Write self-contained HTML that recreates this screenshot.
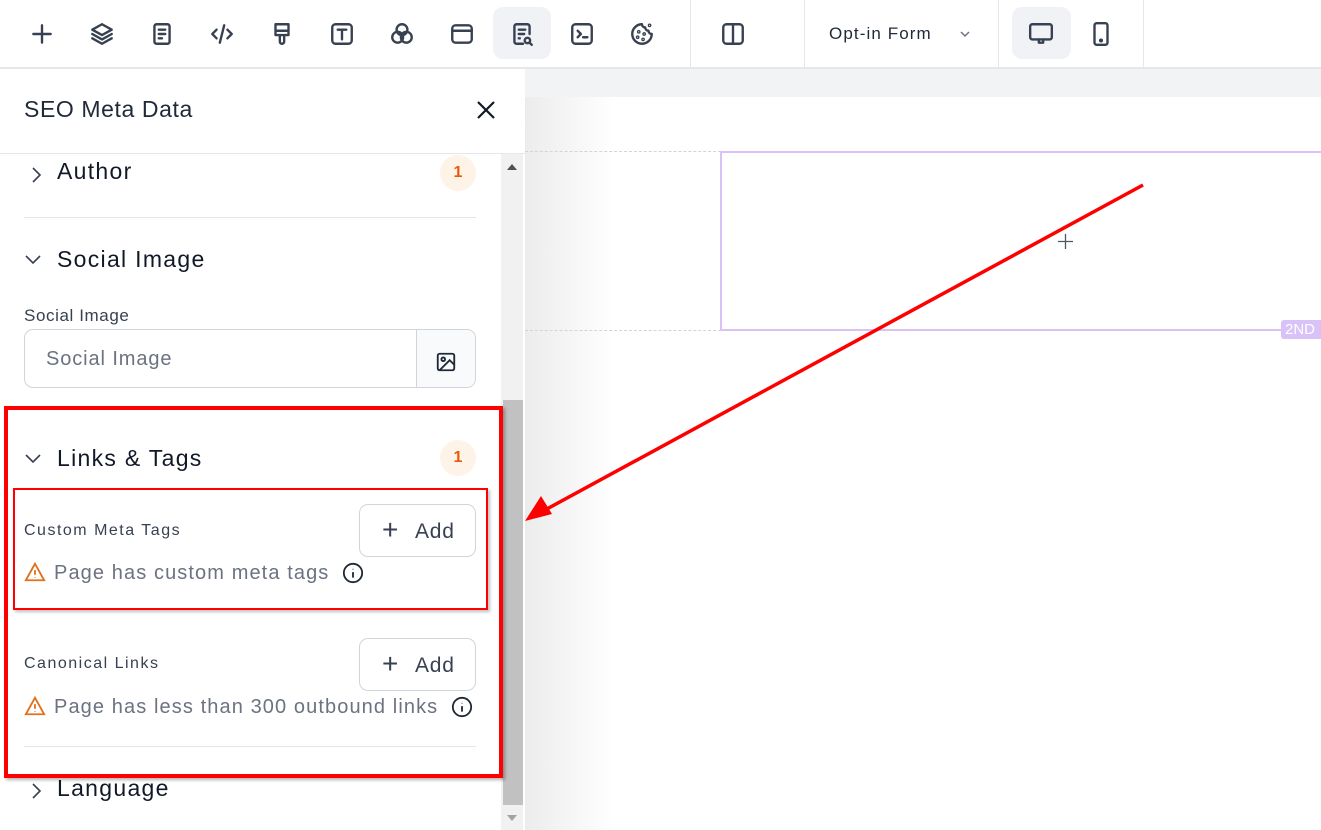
<!DOCTYPE html>
<html><head><meta charset="utf-8"><style>
*{box-sizing:border-box;margin:0;padding:0}
body{width:1321px;height:830px;overflow:hidden;background:#fff;font-family:"Liberation Sans",sans-serif;position:relative;color:#1f2937}
.abs{position:absolute}
.tb{left:0;top:0;width:1321px;height:69px;background:#fff;border-bottom:2px solid #e5e7eb}
.ic{position:absolute;top:21px;width:26px;height:26px}
.ic svg{width:26px;height:26px;fill:none;stroke:#374151;stroke-width:2.2;stroke-linecap:round;stroke-linejoin:round}
.vd{position:absolute;top:0;width:1px;height:67px;background:#e5e7eb}
.sec{font-size:23px;color:#111827;letter-spacing:1.3px}
.badge{width:36px;height:36px;border-radius:18px;background:#fdf3e6;color:#ea580c;font-size:16px;font-weight:bold;text-align:center;line-height:36px}
.lbl{font-size:16px;color:#374151;letter-spacing:1.5px}
.warn{font-size:20px;color:#6b7280;letter-spacing:1.1px}
.btn{width:117px;height:53px;border:1px solid #d1d5db;border-radius:9px;background:#fff;font-size:21px;color:#374151}
.hr{height:1px;background:#e5e7eb;left:24px;width:452px}
</style></head><body>
<div class="abs tb"></div>
<div class="abs" style="left:493px;top:7px;width:58px;height:52px;border-radius:10px;background:#f1f2f5"></div>
<div class="abs" style="left:1012px;top:7px;width:59px;height:52px;border-radius:10px;background:#f1f2f5"></div>
<div class="ic" style="left:29px"><svg viewBox="0 0 24 24"><path d="M12 4v16M4 12h16"/></svg></div>
<div class="ic" style="left:89px"><svg viewBox="0 0 24 24"><path d="M12 3l9 5-9 5-9-5z M3 12l9 5 9-5 M3 16l9 5 9-5"/></svg></div>
<div class="ic" style="left:149px"><svg viewBox="0 0 24 24"><rect x="5" y="3" width="14" height="18" rx="2"/><path d="M9 8h6M9 12h6M9 16h3"/></svg></div>
<div class="ic" style="left:209px"><svg viewBox="0 0 24 24"><path d="M7 8l-4 4 4 4M17 8l4 4-4 4M14 4l-4 16"/></svg></div>
<div class="ic" style="left:269px"><svg viewBox="0 0 24 24"><path d="M6 3h12v10H6z M6 9h12 M10 13v6a2 2 0 004 0v-6"/></svg></div>
<div class="ic" style="left:329px"><svg viewBox="0 0 24 24"><rect x="3" y="3" width="18" height="18" rx="3"/><path d="M8 8h8M12 8v9"/></svg></div>
<div class="ic" style="left:389px"><svg viewBox="0 0 24 24"><circle cx="12" cy="8" r="5"/><circle cx="8" cy="15" r="5"/><circle cx="16" cy="15" r="5"/></svg></div>
<div class="ic" style="left:449px"><svg viewBox="0 0 24 24"><rect x="3" y="4" width="18" height="16" rx="3"/><path d="M3 9h18"/></svg></div>
<div class="ic" style="left:509px"><svg viewBox="0 0 24 24"><path d="M13 21H7a2 2 0 01-2-2V5a2 2 0 012-2h10a2 2 0 012 2v7"/><path d="M9 8h6M9 12h5M9 16h1"/><circle cx="17" cy="18" r="2.5"/><path d="M19 20l2 2"/></svg></div>
<div class="ic" style="left:569px"><svg viewBox="0 0 24 24"><rect x="3" y="3" width="18" height="18" rx="3"/><path d="M8 9l3 3-3 3M13 15h4"/></svg></div>
<div class="ic" style="left:629px"><svg viewBox="0 0 24 24"><path d="M12 3a9 9 0 109 9 3 3 0 01-3-3 3 3 0 01-3-3 3 3 0 01-3-3z"/><circle cx="9" cy="10" r=".6"/><circle cx="8" cy="15" r=".6"/><circle cx="13" cy="17" r=".6"/><circle cx="14" cy="12" r=".6"/><circle cx="19" cy="4" r=".6"/></svg></div>
<div class="vd" style="left:690px"></div>
<div class="ic" style="left:720px"><svg viewBox="0 0 24 24"><rect x="3" y="3" width="18" height="18" rx="3"/><path d="M12 3v18"/></svg></div>
<div class="vd" style="left:804px"></div>
<div class="abs" style="left:829px;top:24px;font-size:17px;color:#1f2937;letter-spacing:1.1px">Opt-in Form</div>
<div class="abs" style="left:958px;top:27px"><svg width="14" height="14" viewBox="0 0 14 14"><path d="M3 5l4 4 4-4" fill="none" stroke="#6b7280" stroke-width="1.5"/></svg></div>
<div class="vd" style="left:998px"></div>
<div class="ic" style="left:1028px"><svg viewBox="0 0 24 24"><rect x="2" y="3" width="20" height="14" rx="2"/><path d="M10 17v3h4v-3"/></svg></div>
<div class="ic" style="left:1088px"><svg viewBox="0 0 24 24"><rect x="6" y="2" width="12" height="20" rx="2"/><circle cx="12" cy="18" r=".8" fill="#374151"/></svg></div>
<div class="vd" style="left:1143px"></div>

<!-- canvas -->
<div class="abs" style="left:525px;top:69px;width:796px;height:28px;background:#f2f3f5"></div>
<div class="abs" style="left:525px;top:97px;width:90px;height:733px;background:linear-gradient(90deg,#ececec,#fff)"></div>
<div class="abs" style="left:525px;top:151px;width:196px;border-top:1px dashed #d1d5db"></div>
<div class="abs" style="left:525px;top:330px;width:196px;border-top:1px dashed #d1d5db"></div>
<div class="abs" style="left:720px;top:151px;width:610px;height:180px;border:2px solid #d8c2f8"></div>
<div class="abs" style="left:1281px;top:320px;width:50px;height:19px;background:#d8c2f8;border-radius:3px;color:#fff;font-size:15px;line-height:19px;padding-left:4px">2ND</div>
<div class="abs" style="left:1058px;top:234px"><svg width="15" height="15"><path d="M7.5 0v15M0 7.5h15" stroke="#4b5563" stroke-width="1.3"/></svg></div>

<!-- panel -->
<div class="abs" style="left:0;top:69px;width:525px;height:761px;background:#fff"></div>
<div class="abs" style="left:0;top:153px;width:525px;height:1px;background:#e5e7eb"></div>
<div class="abs" style="left:24px;top:96px;font-size:23px;color:#1f2937;letter-spacing:.6px">SEO Meta Data</div>
<div class="abs" style="left:476px;top:100px"><svg width="20" height="20"><path d="M2 2l16 16M18 2L2 18" stroke="#111827" stroke-width="2.2"/></svg></div>
<div class="abs" style="left:501px;top:154px;width:22px;height:676px;background:#f1f1f1"></div>
<div class="abs" style="left:503px;top:400px;width:20px;height:405px;background:#c1c1c1"></div>
<div class="abs" style="left:507px;top:164px;width:0;height:0;border-left:5px solid transparent;border-right:5px solid transparent;border-bottom:6px solid #505050"></div>
<div class="abs" style="left:507px;top:815px;width:0;height:0;border-left:5px solid transparent;border-right:5px solid transparent;border-top:6px solid #a3a3a3"></div>

<div class="abs" style="left:30px;top:166px"><svg width="12" height="18"><path d="M3 2l7 7-7 7" fill="none" stroke="#374151" stroke-width="1.6"/></svg></div>
<div class="abs sec" style="left:57px;top:158px">Author</div>
<div class="abs badge" style="left:440px;top:155px">1</div>
<div class="abs hr" style="top:217px"></div>
<div class="abs" style="left:25px;top:253px"><svg width="18" height="12"><path d="M1 2l7 7 7-7" fill="none" stroke="#374151" stroke-width="1.6"/></svg></div>
<div class="abs sec" style="left:57px;top:246px">Social Image</div>
<div class="abs lbl" style="left:24px;top:306px;letter-spacing:.6px;font-size:17px">Social Image</div>
<div class="abs" style="left:24px;top:329px;width:452px;height:59px;border:1px solid #d1d5db;border-radius:9px;overflow:hidden">
<div class="abs" style="left:21px;top:18px;font-size:20px;color:#6b7280;letter-spacing:.9px">Social Image</div>
<div class="abs" style="left:391px;top:0;width:60px;height:59px;background:#f9fafb;border-left:1px solid #d1d5db"></div>
</div>
<div class="abs" style="left:435px;top:351px"><svg width="22" height="22" viewBox="0 0 24 24" fill="none" stroke="#1f2937" stroke-width="2"><rect x="3" y="3" width="18" height="18" rx="2"/><circle cx="9" cy="9" r="2"/><path d="M21 15l-5-5L5 21"/></svg></div>

<div class="abs" style="left:25px;top:452px"><svg width="18" height="12"><path d="M1 2l7 7 7-7" fill="none" stroke="#374151" stroke-width="1.6"/></svg></div>
<div class="abs sec" style="left:57px;top:445px">Links &amp; Tags</div>
<div class="abs badge" style="left:440px;top:440px">1</div>
<div class="abs lbl" style="left:24px;top:522px">Custom Meta Tags</div>
<div class="abs btn" style="left:359px;top:504px"><span class="abs" style="left:22px;top:12px;font-size:28px;line-height:26px">+</span><span class="abs" style="left:55px;top:15px;letter-spacing:.8px">Add</span></div>
<div class="abs" style="left:24px;top:561px"><svg width="22" height="22" viewBox="0 0 24 24" fill="none" stroke="#e2711d" stroke-width="2"><path d="M12 3L2 21h20z"/><path d="M12 10v5M12 18v.5"/></svg></div>
<div class="abs warn" style="left:54px;top:562px">Page has custom meta tags</div>
<div class="abs" style="left:342px;top:562px"><svg width="22" height="22" viewBox="0 0 24 24" fill="none" stroke="#1f2937" stroke-width="2"><circle cx="12" cy="12" r="10"/><path d="M12 11v6M12 7.5v.5"/></svg></div>
<div class="abs lbl" style="left:24px;top:655px">Canonical Links</div>
<div class="abs btn" style="left:359px;top:638px"><span class="abs" style="left:22px;top:12px;font-size:28px;line-height:26px">+</span><span class="abs" style="left:55px;top:15px;letter-spacing:.8px">Add</span></div>
<div class="abs" style="left:24px;top:695px"><svg width="22" height="22" viewBox="0 0 24 24" fill="none" stroke="#e2711d" stroke-width="2"><path d="M12 3L2 21h20z"/><path d="M12 10v5M12 18v.5"/></svg></div>
<div class="abs warn" style="left:54px;top:696px">Page has less than 300 outbound links</div>
<div class="abs" style="left:451px;top:696px"><svg width="22" height="22" viewBox="0 0 24 24" fill="none" stroke="#1f2937" stroke-width="2"><circle cx="12" cy="12" r="10"/><path d="M12 11v6M12 7.5v.5"/></svg></div>
<div class="abs hr" style="top:746px"></div>
<div class="abs" style="left:30px;top:782px"><svg width="12" height="18"><path d="M3 2l7 7-7 7" fill="none" stroke="#374151" stroke-width="1.6"/></svg></div>
<div class="abs sec" style="left:57px;top:775px">Language</div>

<!-- annotations -->
<div class="abs" style="left:4px;top:406px;width:499px;height:372px;border:4px solid #ff0000;box-shadow:2px 2px 3px rgba(0,0,0,.3)"></div>
<div class="abs" style="left:13px;top:488px;width:475px;height:122px;border:2px solid #ff0000;box-shadow:2px 2px 3px rgba(0,0,0,.25)"></div>
<svg class="abs" style="left:0;top:0" width="1321" height="830">
<line x1="1143" y1="185" x2="545" y2="510" stroke="#ff0000" stroke-width="3.5"/>
<polygon points="525,521 541,496 552,514" fill="#ff0000"/>
</svg>
</body></html>
